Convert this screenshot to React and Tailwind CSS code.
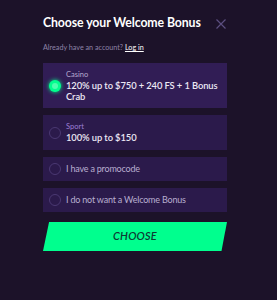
export default function App() {
  const options = [
    { id: 'casino', label: 'Casino', title: '120% up to $750 + 240 FS + 1 Bonus Crab', active: true },
    { id: 'sport', label: 'Sport', title: '100% up to $150' },
    { id: 'promo', title: 'I have a promocode', plain: true },
    { id: 'none', title: 'I do not want a Welcome Bonus', plain: true },
  ]

  return (
    <div className="w-[277px] h-[300px] bg-[#1c1229] font-['Lato',sans-serif] overflow-hidden">
      <div className="ml-[43px] w-[184px] pt-[14px]">
        {/* Header */}
        <div className="flex items-center justify-between">
          <h1 className="text-[12.3px] font-bold text-white leading-[17px] whitespace-nowrap tracking-[-0.1px]">Choose your Welcome Bonus</h1>
          <svg width="10" height="10" viewBox="0 0 10 10" className="mr-[1px] mt-[2px]">
            <path d="M0.5 0.5L9.5 9.5M9.5 0.5L0.5 9.5" stroke="#5c4f80" strokeWidth="1.2" />
          </svg>
        </div>
        <p className="mt-[12px] text-[7.2px] text-[#8d82a6] leading-[10px]">
          Already have an account? <span className="text-white underline">Log in</span>
        </p>

        {/* Options */}
        <div className="mt-[10px] flex flex-col gap-[7px]">
          {options.map(o => (
            <div
              key={o.id}
              className={
                'flex items-center gap-[5px] pl-[6px] pr-[2px] ' +
                (o.active ? 'bg-[#311d55] h-[45px]' : o.plain ? 'bg-[#2b1a4b] h-[24px]' : 'bg-[#2b1a4b] h-[35px]')
              }
            >
              {o.active ? (
                <span className="w-[12px] h-[12px] shrink-0 rounded-full bg-[#00ff8e] shadow-[0_0_4px_#00ff8e] flex items-center justify-center">
                  <span className="w-[6px] h-[6px] rounded-full bg-[#4dffaf]" />
                </span>
              ) : (
                <span className="w-[12px] h-[12px] shrink-0 rounded-full border border-[#4a3872]" />
              )}
              <div className="flex flex-col w-[154px]">
                {o.label && (
                  <span className={'text-[7.5px] leading-[11px] ' + (o.active ? 'text-[#b6a9cf]' : 'text-[#9c7fd6]')}>{o.label}</span>
                )}
                <span
                  className={
                    o.plain
                      ? 'text-[9px] text-[#b8aed0] leading-[12px] tracking-[-0.2px]'
                      : 'text-[9.4px] font-semibold text-[#ece8f4] leading-[11.5px] tracking-[-0.1px]'
                  }
                >
                  {o.title}
                </span>
              </div>
            </div>
          ))}
        </div>

        {/* Button */}
        <div className="mt-[10px] h-[29px] flex items-center justify-center bg-[#00ff8e] [clip-path:polygon(3.3%_0,100%_0,97%_100%,0_100%)]">
          <span className="text-[11px] italic font-semibold text-[#0d3b35] tracking-[0.2px]">CHOOSE</span>
        </div>
      </div>
    </div>
  )
}
